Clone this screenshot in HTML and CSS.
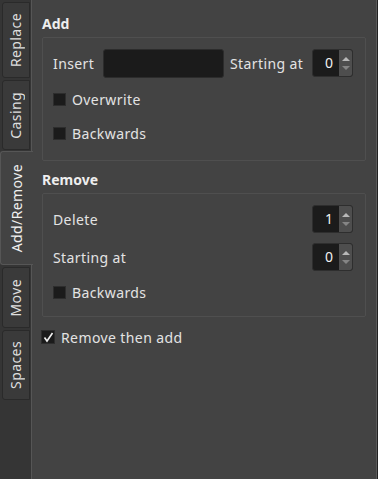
FILE: index.html
```html
<!DOCTYPE html>
<html lang="en">
<head>
  <meta charset="UTF-8">
  <title>Rename options</title>
  <link rel="stylesheet" href="styles.css">
</head>
<body>
  <div class="window">
    <div class="tabs">
      <div class="tab tab-replace"><span>Replace</span></div>
      <div class="tab tab-casing"><span>Casing</span></div>
      <div class="tab tab-addremove active"><span>Add/Remove</span></div>
      <div class="tab tab-move"><span>Move</span></div>
      <div class="tab tab-spaces"><span>Spaces</span></div>
    </div>

    <div class="pane">
      <div class="group-title">Add</div>
      <div class="group add-group">
        <div class="row">
          <span class="label insert">Insert</span>
          <div class="line-edit"></div>
          <span class="label starting">Starting at</span>
          <div class="spin">
            <span class="spin-value">0</span>
            <span class="spin-buttons"><i class="up"></i><i class="down"></i></span>
          </div>
        </div>
        <div class="check first"><span class="box"></span>Overwrite</div>
        <div class="check"><span class="box"></span>Backwards</div>
      </div>

      <div class="group-title remove-title">Remove</div>
      <div class="group remove-group">
        <div class="row">
          <span class="label">Delete</span>
          <div class="spin">
            <span class="spin-value">1</span>
            <span class="spin-buttons"><i class="up"></i><i class="down"></i></span>
          </div>
        </div>
        <div class="row second">
          <span class="label">Starting at</span>
          <div class="spin">
            <span class="spin-value">0</span>
            <span class="spin-buttons"><i class="up"></i><i class="down"></i></span>
          </div>
        </div>
        <div class="check third"><span class="box"></span>Backwards</div>
      </div>

      <div class="check outer">
        <span class="box checked">
          <svg width="11" height="11" viewBox="0 0 11 11"><path d="M1.5 5.5 L4 9 L9.5 1" fill="none" stroke="#f0f0f0" stroke-width="1.6"/></svg>
        </span>Remove then add
      </div>
    </div>
  </div>
</body>
</html>
```

FILE: styles.css
```css
html, body { margin:0; padding:0; }
body { background:#353535; font-family:"Noto Sans", "DejaVu Sans", sans-serif; font-size:14px; letter-spacing:.4px; color:#e3e3e3; }
.window { display:flex; width:377px; height:479px; overflow:hidden; box-shadow:1px 0 0 #222; }

.tabs { width:31px; flex:none; display:flex; flex-direction:column; position:relative; z-index:1; }
.tab { box-sizing:border-box; width:28px; margin:2px 0 0 2px; display:flex; justify-content:center; align-items:center; background:#3a3a3a; border:1px solid #2a2a2a; border-radius:3px 0 0 3px; color:#dedede; }
.tab span { writing-mode:vertical-rl; transform:rotate(180deg); line-height:18px; }
.tab-replace { height:76px; }
.tab-casing { height:70px; }
.tab-move { height:61px; }
.tab-spaces { height:70px; }
.tab.active { width:33px; height:114px; margin:1px -2px 0 0; background:#434343; border:1px solid #565656; border-right:none; color:#f0f0f0; }
.tab.active + .tab { margin-top:2px; }

.pane { flex:1; box-sizing:border-box; height:479px; background:#434343; border-left:1px solid #565656; border-right:1px solid #5a5a5a; padding:14px 10px 0 10px; }
.group-title { font-weight:700; letter-spacing:0; line-height:19px; color:#eeeeee; margin-bottom:4px; }
.remove-title { margin-top:9px; }

.group { border:1px solid #4f4f4f; border-radius:2px; padding:10px 12px 10px 10px; }
.remove-group { padding-bottom:7px; }
.row { display:flex; align-items:center; height:30px; }
.row.second { margin-top:8px; }
.label { line-height:19px; white-space:nowrap; }
.label.insert { width:50px; }
.line-edit { box-sizing:border-box; width:121px; height:29px; background:#1b1b1b; border:1px solid #2c2c2c; border-radius:3px; }
.starting { margin-left:6px; }

.spin { box-sizing:border-box; display:flex; width:41px; height:28px; margin-left:auto; background:#1b1b1b; border:1px solid #2e2e2e; border-radius:3px; overflow:hidden; }
.spin-value { flex:1; text-align:right; padding-right:6px; line-height:26px; letter-spacing:0; color:#f2f2f2; }
.spin-buttons { width:13px; background:#4e4e4e; display:flex; flex-direction:column; align-items:center; justify-content:center; gap:5px; }
.spin-buttons i { display:block; width:0; height:0; border-left:4px solid transparent; border-right:4px solid transparent; }
.spin-buttons .up { border-bottom:4px solid #b8b8b8; }
.spin-buttons .down { border-top:4px solid #858585; }

.check { display:flex; align-items:center; height:34px; line-height:19px; }
.check.first { margin-top:4px; }
.check.third { margin-top:3px; }
.box { box-sizing:border-box; width:13px; height:13px; margin-right:6px; background:#1b1b1b; border:1px solid #2d2d2d; display:flex; align-items:center; justify-content:center; }
.check.outer { height:20px; margin-top:10px; margin-left:-1px; }
.check.outer .box { width:14px; height:14px; margin-right:6px; }
```
